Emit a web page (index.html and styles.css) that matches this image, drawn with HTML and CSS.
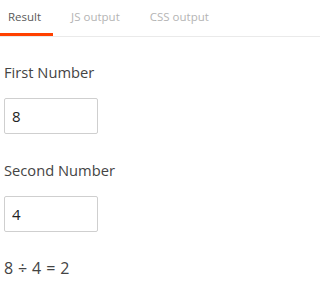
FILE: index.html
```html
<!DOCTYPE html>
<html>
<head>
<meta charset="utf-8">
<link rel="stylesheet" href="styles.css">
</head>
<body>
<nav class="tabs">
  <div class="tab active">Result</div>
  <div class="tab">JS output</div>
  <div class="tab">CSS output</div>
</nav>
<main class="content">
  <div class="field">
    <label class="label">First Number</label>
    <input class="num" type="text" value="8">
  </div>
  <div class="field">
    <label class="label">Second Number</label>
    <input class="num" type="text" value="4">
  </div>
  <p class="result">8 ÷ 4 = 2</p>
</main>
</body>
</html>
```
FILE: styles.css
```css
html, body {
  margin: 0;
  padding: 0;
  background: #fff;
}
body {
  font-family: "Open Sans", "Noto Sans", sans-serif;
  color: #444;
}
.tabs {
  display: flex;
  gap: 10px;
  height: 36px;
  border-bottom: 1px solid #eaeaea;
  box-sizing: content-box;
}
.tab {
  font-size: 11.5px;
  line-height: 33px;
  padding: 0 12px 0 8px;
  color: #b4b4b4;
  border-bottom: 3px solid transparent;
  white-space: nowrap;
}
.tab.active {
  color: #5a5a5a;
  border-bottom-color: #ff4000;
}
.content {
  padding: 25px 4px 0 4px;
}
.field {
  display: flex;
  flex-direction: column;
  align-items: flex-start;
  gap: 16px;
  margin-bottom: 26px;
}
.label {
  font-size: 14.7px;
  line-height: 20px;
  color: #444;
}
.num {
  box-sizing: border-box;
  width: 94px;
  height: 36px;
  margin: 0;
  border: 1px solid #cfcfcf;
  border-radius: 2px;
  padding: 0 7px;
  font-family: inherit;
  font-size: 15px;
  color: #222;
  outline: none;
}
.result {
  margin: 0;
  font-size: 16px;
  line-height: 20px;
  word-spacing: 0.75px;
  color: #444;
}
```
